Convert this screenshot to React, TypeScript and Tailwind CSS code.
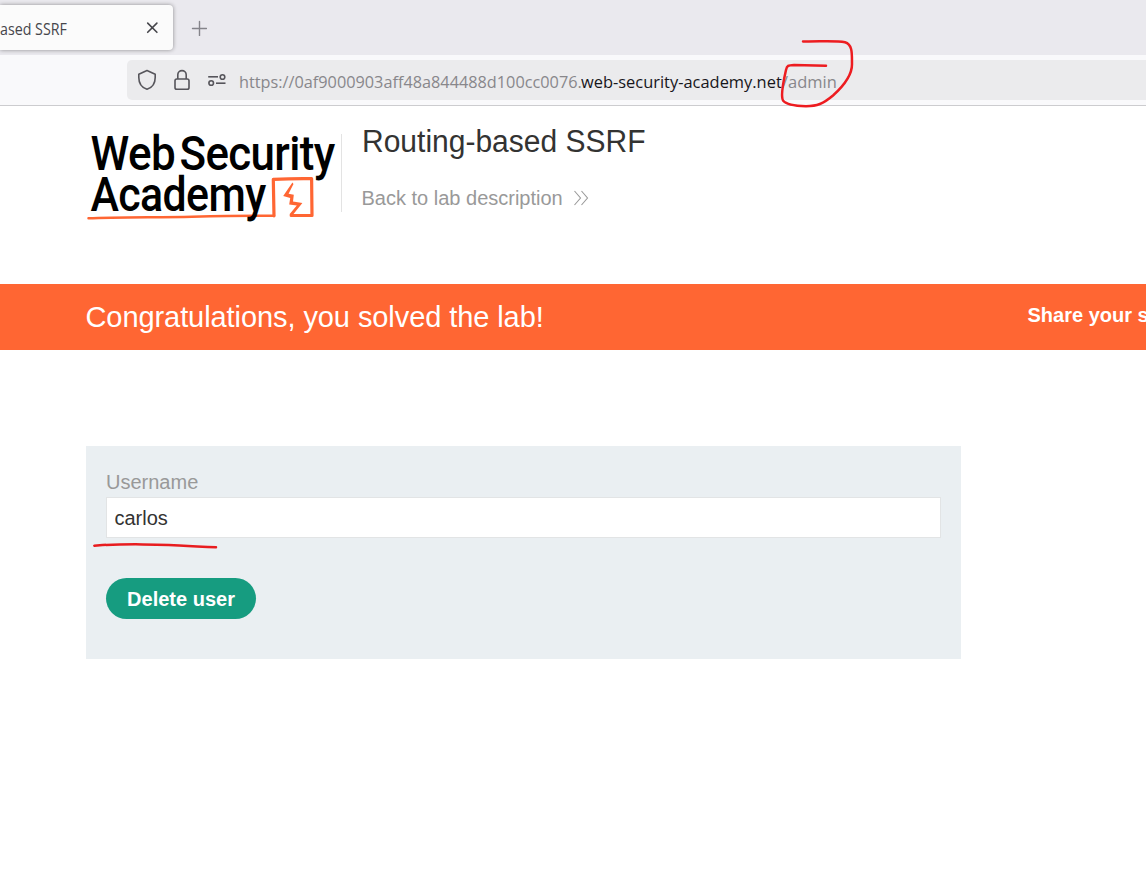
function TabStrip() {
  return (
    <div className="flex h-[55px] items-start overflow-hidden bg-[#eae9ee] pt-[5px]">
      <div className="flex h-[45px] w-[173px] items-center justify-between rounded-r-[4px] bg-[#fbfbfb] pr-[14px] shadow-[0_0_4px_rgba(0,0,0,0.4)]">
        <span className="origin-left scale-x-[0.89] whitespace-nowrap pt-[2px] font-['Open_Sans',sans-serif] text-[16px] text-[#46464b]">
          ased SSRF
        </span>
        <svg className="size-[14px]" viewBox="0 0 14 14" fill="none" stroke="#46464b" strokeWidth="1.6" strokeLinecap="round">
          <path d="M2.7 2.1 11.9 11.3M11.9 2.1 2.7 11.3" />
        </svg>
      </div>
      <svg className="ml-[18px] mt-[15px] size-4" viewBox="0 0 16 16" fill="none" stroke="#85848a" strokeWidth="1.4" strokeLinecap="round">
        <path d="M8.5 1.5v14M1.5 8.5h14" />
      </svg>
    </div>
  );
}

function AddressBar() {
  return (
    <div className="flex h-[51px] border-b border-[#cccccf] bg-[#f9f9fb] pl-[127px] pt-[5px]">
      <div className="flex h-10 flex-1 items-center rounded-l-[5px] bg-[#ebebed] pl-[10px]">
        <svg className="h-[22px] w-5 shrink-0" viewBox="0 0 20 22" fill="none" stroke="#56555b" strokeWidth="1.6" strokeLinejoin="round">
          <path d="M10 1.6 18.2 5.2V8.5C18.2 14 15.2 18.6 10 20.3 4.8 18.6 1.8 14 1.8 8.5V5.2Z" />
        </svg>
        <svg className="ml-[17px] h-[22px] w-4 shrink-0" viewBox="0 0 16 22" fill="none" stroke="#56555b" strokeWidth="1.6">
          <rect x="1" y="10" width="14" height="10.2" rx="1.8" />
          <path d="M3.8 10V5.8a4.2 4.2 0 0 1 8.4 0V10" />
        </svg>
        <svg className="ml-[17px] h-[22px] w-5 shrink-0" viewBox="0 0 20 22" fill="none" stroke="#56555b" strokeWidth="1.6">
          <circle cx="15.5" cy="8" r="2.3" />
          <path d="M1.2 7.8H11" />
          <circle cx="4.2" cy="14" r="2.3" />
          <path d="M9 14.2h9.5" />
        </svg>
        <div className="ml-[12px] flex whitespace-nowrap pt-1 font-['Open_Sans',sans-serif] text-[17px] text-[#88878b]">
          <span className="w-[342px]"><span className="inline-block origin-left scale-x-[0.957]">https://0af9000903aff48a844488d100cc0076.</span></span>
          <span className="w-[200.5px] text-[#17161b]"><span className="inline-block origin-left scale-x-[0.966]">web-security-academy.net</span></span>
          <span><span className="inline-block origin-left scale-x-[0.97]">/admin</span></span>
        </div>
      </div>
    </div>
  );
}

function Logo() {
  return (
    <svg className="-mt-[6px] h-[106px] w-[256px] shrink-0" viewBox="84 120 256 106" role="img" aria-label="Web Security Academy">
      <g fill="none" stroke="#ff6633" strokeLinecap="round" strokeLinejoin="round">
        <path d="M88.5 218.3C115 217.2 155 217.4 192 216.7S245 215.7 274 215.8" strokeWidth="2.5" />
        <path d="M274 215.8 273.3 179.4Q293 178.3 311.6 178.6L312 215.4 291.2 215.5" strokeWidth="3.2" />
      </g>
      <path d="M292.4 182.5 283.2 196 290.2 198 289.2 204.6 296.8 205.4 289.5 214.2 291.5 216.5 302.4 203 293 201.5 293.8 194.8 288.6 193.8 293.5 184Z" fill="#ff6633" />
      <g fill="#000" className="font-['Roboto',sans-serif]" fontSize="48" fontWeight="500" letterSpacing="-0.7">
        <text x="90.5" y="170" textLength="84.5" lengthAdjust="spacingAndGlyphs">Web</text>
        <text x="179.5" y="170" textLength="155" lengthAdjust="spacingAndGlyphs">Security</text>
        <text x="90.5" y="210.5" textLength="175" lengthAdjust="spacingAndGlyphs">Academy</text>
      </g>
    </svg>
  );
}

function LabHeader() {
  return (
    <header className="flex h-[178px] pl-[84px] pt-[20px]">
      <Logo />
      <div className="ml-px mt-2 h-[78px] w-px bg-[#e3e3e3]" />
      <div className="ml-[19.5px]">
        <h1 className="origin-left scale-x-[0.968] whitespace-nowrap text-[31px] leading-[32px] text-[#333332]">Routing-based SSRF</h1>
        <a className="mt-[28px] flex items-center text-[20px] leading-[24px] text-[#999999]" href="#">
          Back to lab description
          <svg className="ml-[10px] size-[18px]" viewBox="0 0 18 18" fill="none" stroke="#999" strokeWidth="1.1">
            <path d="m1.5 2 6 7-6 7M8.5 2l6 7-6 7" />
          </svg>
        </a>
      </div>
    </header>
  );
}

function SolvedBanner() {
  return (
    <section className="flex h-[66px] items-center justify-between overflow-hidden whitespace-nowrap bg-[#ff6633] pl-[85.5px] text-white">
      <p className="pt-[2px] text-[29px] tracking-[-0.08px]">Congratulations, you solved the lab!</p>
      <p className="w-[118.5px] pb-1 text-[20px] font-bold">Share your s</p>
    </section>
  );
}

function DeleteForm() {
  return (
    <form className="ml-[86px] mt-24 h-[213px] w-[875px] bg-[#eaeff2] px-5 pt-6" onSubmit={(e) => e.preventDefault()}>
      <label className="block text-[20px] leading-6 text-[#999999]" htmlFor="username">Username</label>
      <div className="relative mt-[3px]">
        <input id="username" defaultValue="carlos" className="block h-[41px] w-full border border-[#e2e4e5] bg-white px-[7.5px] pt-[2px] text-[20px] text-[#333332] outline-none" />
        <svg className="pointer-events-none absolute -left-[14px] top-[44px] h-[10px] w-[130px]" viewBox="0 0 130 10" fill="none" stroke="#e81c1f" strokeWidth="2.5" strokeLinecap="round">
          <path d="M2.3 4.7C26 2.6 76 3.2 96 5c13 1.1 20 .8 28 1.2" />
        </svg>
      </div>
      <button className="mt-10 h-[41px] w-[150px] rounded-full bg-[#169c80] text-[20px] font-bold text-white" type="submit">Delete user</button>
    </form>
  );
}

export default function App() {
  return (
    <div className="relative h-[871px] w-[1146px] overflow-hidden bg-white font-['Liberation_Sans',Arial,sans-serif]">
      <TabStrip />
      <AddressBar />
      <main>
        <LabHeader />
        <SolvedBanner />
        <DeleteForm />
      </main>
      <svg className="pointer-events-none absolute left-[775px] top-[35px] h-[76px] w-[84px]" viewBox="775 35 84 76" fill="none" stroke="#ed1c20" strokeWidth="2.5" strokeLinecap="round" strokeLinejoin="round">
        <path d="M803 41.4C818 41.8 836 40.3 845 42.3 853 44.5 851.8 55 852 64 852.2 76 843 86.5 833 95.5 823 104 817 106 806 106.2 797 106 786 104.5 783 100.5 780 95 784.5 77 786 70 787 65.5 788 65.2 794 65L826 65.8" />
      </svg>
    </div>
  );
}
